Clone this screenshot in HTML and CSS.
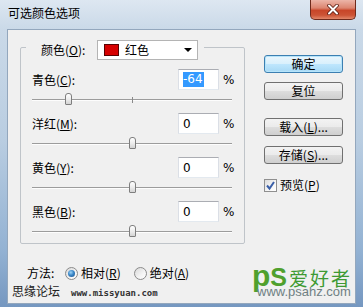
FILE: index.html
```html
<!DOCTYPE html>
<html lang="zh-CN">
<head>
<meta charset="utf-8">
<title>可选颜色选项</title>
<link rel="stylesheet" href="styles.css">
</head>
<body>
<div class="window">
  <div class="titlebar">
    <span class="title">可选颜色选项</span>
    <div class="close">
      <svg width="14" height="11" viewBox="0 0 14 11">
        <path d="M3 1.5 L11 9.5 M11 1.5 L3 9.5" stroke="#5b1c12" stroke-width="3.6" stroke-linecap="round"/>
        <path d="M3 1.5 L11 9.5 M11 1.5 L3 9.5" stroke="#ffffff" stroke-width="2" stroke-linecap="round"/>
      </svg>
    </div>
  </div>
  <div class="client">
    <div class="main">
      <fieldset class="group">
        <legend class="legend">
          <div class="legend-inner">
            <span class="lbl legend-lbl">颜色(<u>O</u>):</span>
            <div class="select">
              <span class="swatch"></span>
              <span class="seltext">红色</span>
              <span class="arrow"></span>
            </div>
          </div>
        </legend>
        <div class="row">
          <div class="field">
            <span class="lbl">青色(<u>C</u>):</span>
            <div class="input"><span class="sel">-64</span></div>
            <span class="pct">%</span>
          </div>
          <div class="slider">
            <div class="track"></div>
            <div class="tick"></div>
            <div class="thumb" style="left:18%"></div>
          </div>
        </div>
        <div class="row">
          <div class="field">
            <span class="lbl">洋红(<u>M</u>):</span>
            <div class="input"><span>0</span></div>
            <span class="pct">%</span>
          </div>
          <div class="slider">
            <div class="track"></div>
            <div class="tick"></div>
            <div class="thumb" style="left:50%"></div>
          </div>
        </div>
        <div class="row">
          <div class="field">
            <span class="lbl">黄色(<u>Y</u>):</span>
            <div class="input"><span>0</span></div>
            <span class="pct">%</span>
          </div>
          <div class="slider">
            <div class="track"></div>
            <div class="tick"></div>
            <div class="thumb" style="left:50%"></div>
          </div>
        </div>
        <div class="row">
          <div class="field">
            <span class="lbl">黑色(<u>B</u>):</span>
            <div class="input"><span>0</span></div>
            <span class="pct">%</span>
          </div>
          <div class="slider">
            <div class="track"></div>
            <div class="tick"></div>
            <div class="thumb" style="left:50%"></div>
          </div>
        </div>
      </fieldset>
      <div class="buttons">
        <button class="btn default">确定</button>
        <button class="btn b-reset">复位</button>
        <button class="btn b-load">载入(<u>L</u>)...</button>
        <button class="btn b-save">存储(<u>S</u>)...</button>
        <div class="check">
          <span class="cbox">
            <svg width="11" height="11" viewBox="0 0 11 11"><path d="M2 5.5 L4.5 8.5 L9 2" fill="none" stroke="#3a5fa8" stroke-width="2"/></svg>
          </span>
          <span>预览(<u>P</u>)</span>
        </div>
      </div>
    </div>
    <div class="bottom">
      <div class="bottom-left">
        <div class="method">
          <span class="method-lbl">方法:</span>
          <span class="radio on"><span class="dot"></span></span>
          <span class="rtext">相对(<u>R</u>)</span>
          <span class="radio"></span>
          <span class="rtext">绝对(<u>A</u>)</span>
        </div>
        <div class="wm">
          <span class="wm-name">思缘论坛</span>
          <span class="wm-url">www.missyuan.com</span>
        </div>
      </div>
      <div class="logo">
        <div class="logo-top">
          <span class="logo-p">p</span><span class="logo-s">S</span>
          <span class="logo-cn">爱好者</span>
        </div>
        <div class="logo-url">www.psahz.com</div>
      </div>
    </div>
  </div>
</div>
</body>
</html>
```
FILE: styles.css
```css
* { box-sizing: border-box; }
html, body { margin: 0; padding: 0; }
body {
  width: 363px;
  height: 307px;
  overflow: hidden;
  font-family: "Noto Sans CJK SC", "Noto Sans", sans-serif;
  font-size: 12px;
  line-height: 16px;
  color: #000;
}
u { text-decoration: underline; text-underline-offset: 1px; }

.window {
  width: 363px;
  height: 307px;
  display: flex;
  flex-direction: column;
  background: linear-gradient(180deg, #dde7f1 0px, #cad9e8 29px, #b9cde1 140px, #93b2d3 250px, #7597c0 307px);
}
.titlebar {
  height: 29px;
  flex: none;
  display: flex;
  align-items: flex-start;
}
.title { margin: 5px 0 0 8px; }
.close {
  margin-left: auto;
  margin-right: 7px;
  width: 46px;
  height: 20px;
  border: 1px solid #6e2a1c;
  border-top: none;
  border-radius: 0 0 5px 5px;
  background: linear-gradient(180deg, #ecb5a8 0%, #dc8570 42%, #c84629 55%, #cc5436 80%, #e2876a 100%);
  display: flex;
  align-items: center;
  justify-content: center;
  padding-bottom: 1px;
}

.client {
  flex: 1;
  min-height: 0;
  margin: 0 7px 3px 7px;
  border: 1px solid #93a7bd;
  background: #f0f0f0;
  display: flex;
  flex-direction: column;
  padding-top: 4px;
}
.main {
  display: flex;
  gap: 19px;
  align-items: flex-start;
  margin-left: 12px;
}

/* group box */
.group {
  width: 225px;
  margin: 0;
  padding: 9px 11px 6px 11px;
  border: 1px solid #bfc4c9;
  border-radius: 2px;
  min-width: 0;
}
.legend {
  margin-left: -6px;
  padding: 6px 6px 0 15px;
}
.legend-inner { display: flex; align-items: center; }
.legend-lbl { width: 56px; }
.select {
  width: 101px;
  height: 20px;
  border: 1px solid #b4b4b4;
  background: #fff;
  display: flex;
  align-items: center;
}
.swatch {
  width: 15px;
  height: 12px;
  margin-left: 6px;
  background: #d60000;
  border: 1px solid #5a0000;
}
.seltext { margin-left: 6px; }
.arrow {
  margin-left: auto;
  margin-right: 5px;
  width: 0;
  height: 0;
  border-left: 4px solid transparent;
  border-right: 4px solid transparent;
  border-top: 4px solid #000;
}

.row { margin-bottom: 8px; }
.row:last-child { margin-bottom: 0; }
.field {
  display: grid;
  grid-template-columns: 146px 41px auto;
  align-items: center;
  height: 21px;
}
.input {
  height: 21px;
  border: 1px solid #dbdfe6;
  border-top-color: #abadb3;
  border-bottom-color: #e3e9ef;
  background: #fff;
  padding-left: 4px;
  display: flex;
  align-items: center;
  font-family: "DejaVu Sans", "Noto Sans", sans-serif;
  font-size: 12px;
}
.sel { background: #3399ff; color: #fff; line-height: 15px; padding-right: 1px; }
.pct { margin-left: 4px; font-family: "DejaVu Sans", sans-serif; }

.slider {
  position: relative;
  width: 200px;
  height: 12px;
  margin-top: 3px;
  padding-top: 6px;
}
.track {
  height: 2px;
  border-top: 1px solid #9c9c9c;
  border-bottom: 1px solid #fdfdfd;
}
.tick {
  position: absolute;
  left: 50%;
  top: 4px;
  width: 1px;
  height: 6px;
  background: #8a8a8a;
}
.thumb {
  position: absolute;
  top: 0;
  width: 7px;
  height: 12px;
  margin-left: -3px;
  border: 1px solid #7e7e7e;
  border-radius: 3px 3px 1px 1px;
  background: linear-gradient(180deg, #ffffff 0%, #eeeeee 50%, #d4d4d4 100%);
}

/* buttons */
.buttons {
  display: flex;
  flex-direction: column;
  width: 79px;
  margin-top: 21px;
}
.btn {
  width: 79px;
  height: 18px;
  padding: 0;
  font: inherit;
  line-height: 14px;
  color: #000;
  border: 1px solid #707070;
  border-radius: 3px;
  background: linear-gradient(180deg, #f3f3f3 0%, #ebebeb 48%, #dddddd 52%, #cfcfcf 100%);
}
.btn.default {
  border-color: #3c7fb1;
  box-shadow: inset 0 0 0 1px #b6e4fa;
  background: linear-gradient(180deg, #eaf6fd 0%, #d9f0fc 48%, #bee6fd 52%, #a7d9f5 100%);
}
.b-reset { margin-top: 9px; }
.b-load { margin-top: 18px; }
.b-save { margin-top: 10px; }
.check {
  margin-top: 13px;
  display: flex;
  align-items: center;
  gap: 3px;
}
.cbox {
  width: 13px;
  height: 13px;
  border: 1px solid #8f8f8f;
  background: linear-gradient(135deg, #dcdcdc 0%, #f6f6f6 60%, #ffffff 100%);
  display: flex;
  align-items: center;
  justify-content: center;
}

/* bottom */
.bottom {
  display: flex;
  margin-top: 21px;
}
.bottom-left { flex: 1; }
.method {
  display: flex;
  align-items: center;
  margin-left: 19px;
  height: 16px;
}
.method-lbl { width: 38px; }
.radio {
  width: 13px;
  height: 13px;
  border-radius: 50%;
  border: 1px solid #8a8a8a;
  background: linear-gradient(135deg, #d8d8d8 0%, #f4f4f4 60%, #ffffff 100%);
  display: flex;
  align-items: center;
  justify-content: center;
}
.radio .dot {
  width: 7px;
  height: 7px;
  border-radius: 50%;
  background: radial-gradient(circle at 40% 35%, #9fd4f6 0%, #3a87c8 45%, #1c4f87 100%);
}
.rtext { margin-left: 3px; margin-right: 13px; }
.wm {
  display: flex;
  align-items: baseline;
  margin-left: 4px;
  margin-top: 2px;
}
.wm-name { color: #222; font-size: 12px; }
.wm-url {
  margin-left: 11px;
  font-family: "DejaVu Sans Mono", monospace;
  font-weight: bold;
  font-size: 9px;
  color: #333;
}

.logo {
  width: 100px;
  margin-right: 3px;
  margin-top: -2px;
  display: flex;
  flex-direction: column;
}
.logo-top {
  display: flex;
  align-items: baseline;
  height: 26px;
}
.logo-p, .logo-s {
  font-family: "Liberation Sans", sans-serif;
  font-weight: bold;
  color: #4fa02d;
  line-height: 26px;
}
.logo-p { font-size: 30px; }
.logo-s { font-size: 25px; }
.logo-cn {
  margin-left: 2px;
  font-size: 19px;
  letter-spacing: 2px;
  color: #3e9a33;
  line-height: 20px;
}
.logo-url {
  margin-left: 5px;
  margin-top: -4px;
  font-family: "Liberation Sans", Arial, sans-serif;
  font-size: 13px;
  line-height: 14px;
  color: #6f8083;
}
```
